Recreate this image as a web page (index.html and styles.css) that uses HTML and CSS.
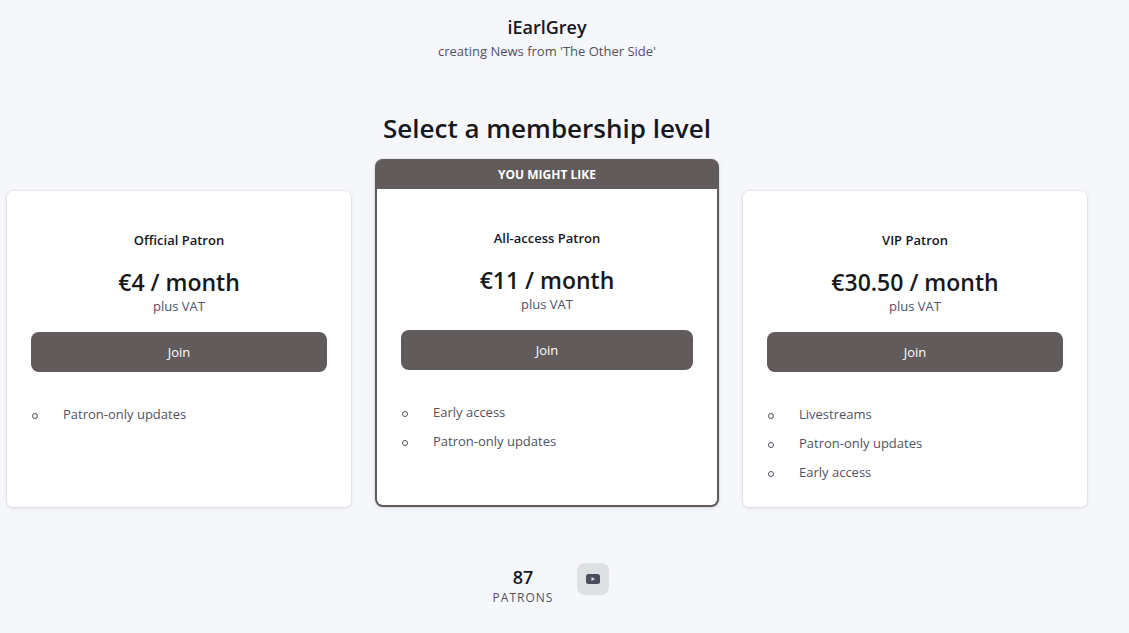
FILE: index.html
```html
<!DOCTYPE html>
<html lang="en">

<head>
    <meta charset="UTF-8">
    <meta name="viewport" content="width=device-width, initial-scale=1.0">
    <title>iEarlGrey | Membership</title>
    <link rel="stylesheet" href="styles.css">
</head>

<body>
    <header class="creator">
        <h1>iEarlGrey</h1>
        <p>creating News from 'The Other Side'</p>
    </header>

    <main>
        <h2>Select a membership level</h2>
        <div class="tiers">
            <section class="tier">
                <div class="tier-body">
                    <h3>Official Patron</h3>
                    <p class="price">€4 / month</p>
                    <p class="vat">plus VAT</p>
                    <button type="button">Join</button>
                    <ul>
                        <li>Patron-only updates</li>
                    </ul>
                </div>
            </section>
            <section class="tier featured">
                <p class="ribbon">YOU MIGHT LIKE</p>
                <div class="tier-body">
                    <h3>All-access Patron</h3>
                    <p class="price">€11 / month</p>
                    <p class="vat">plus VAT</p>
                    <button type="button">Join</button>
                    <ul>
                        <li>Early access</li>
                        <li>Patron-only updates</li>
                    </ul>
                </div>
            </section>
            <section class="tier">
                <div class="tier-body">
                    <h3>VIP Patron</h3>
                    <p class="price">€30.50 / month</p>
                    <p class="vat">plus VAT</p>
                    <button type="button">Join</button>
                    <ul>
                        <li>Livestreams</li>
                        <li>Patron-only updates</li>
                        <li>Early access</li>
                    </ul>
                </div>
            </section>
        </div>
    </main>

    <footer class="stats">
        <div class="patrons">
            <strong>87</strong>
            <span>PATRONS</span>
        </div>
        <a class="social" href="#" aria-label="YouTube">
            <svg width="14" height="10" viewBox="0 0 14 10">
                <rect width="14" height="10" rx="2.5" fill="#4b4d5c" />
                <path d="M5.5 2.9v4.2L9 5z" fill="#dfe0e4" />
            </svg>
        </a>
    </footer>
</body>

</html>
```

FILE: styles.css
```css
*,
*::before {
    box-sizing: border-box;
}

body {
    margin: 0;
    padding: 15px 42px 24px 7px;
    font-family: "Segoe UI", "Open Sans", "Noto Sans", sans-serif;
    font-size: 13px;
    line-height: 21px;
    color: #52525f;
    background: #f5f7fb;
}

h1,
h2,
h3,
p,
ul {
    margin: 0;
    padding: 0;
}

h1,
h2,
h3,
.price,
.patrons strong {
    font-weight: 600;
    color: #17171c;
}

/* Creator name */
.creator {
    text-align: center;
}

h1 {
    font-size: 18px;
    line-height: 24px;
}

.creator p {
    margin-top: 2px;
}

/* Membership tiers */
h2 {
    margin: 48px 0 13px;
    font-size: 26px;
    line-height: 36px;
    text-align: center;
}

.tiers {
    display: grid;
    grid-template-columns: repeat(3, 1fr);
    gap: 24px;
}

.tier {
    margin-top: 32px;
    background: #fff;
    border-radius: 6px;
    box-shadow: 0 0 0 1px rgba(0, 0, 0, 0.04), 0 1px 4px rgba(0, 0, 0, 0.1);
}

.tier.featured {
    margin-top: 0;
    border: 2px solid #625b5b;
    border-top: none;
    border-radius: 8px;
    background: #625b5b;
}

.ribbon {
    padding: 5px 0 4px;
    font-size: 12px;
    font-weight: 700;
    text-align: center;
    color: #fff;
}

.tier-body {
    padding: 40px 24px 24px;
    text-align: center;
}

.featured .tier-body {
    height: calc(100% - 30px);
    background: #fff;
    border-radius: 0 0 6px 6px;
}

h3 {
    margin-bottom: 18px;
    font-size: 13px;
    line-height: 18px;
}

.price {
    font-size: 23px;
    line-height: 30px;
}

.vat {
    line-height: 19px;
}

button {
    display: block;
    width: 100%;
    height: 40px;
    margin: 16px 0 32px;
    border: none;
    border-radius: 8px;
    font: inherit;
    color: #fff;
    background: #625b5b;
    cursor: pointer;
}

button:hover {
    background: #4f4949;
}

ul {
    display: grid;
    gap: 8px;
    list-style: none;
    text-align: left;
}

li {
    display: flex;
    align-items: center;
    gap: 25px;
}

li::before {
    content: "";
    width: 6px;
    height: 6px;
    margin: 3px 0 0 1px;
    border: 1px solid #52525f;
    border-radius: 50%;
}

/* Patron count and links */
.stats {
    display: flex;
    justify-content: center;
    align-items: flex-start;
    gap: 24px;
    margin-top: 56px;
    padding-left: 8px;
}

.patrons {
    display: flex;
    flex-direction: column;
    align-items: center;
}

.patrons strong {
    font-size: 18px;
    line-height: 28px;
}

.patrons span {
    font-size: 12px;
    line-height: 14px;
    letter-spacing: 1px;
}

.social {
    display: grid;
    place-items: center;
    width: 32px;
    height: 32px;
    border-radius: 8px;
    background: #dfe0e4;
}

/* Stack the tiers on small screens */
@media (max-width: 720px) {
    body {
        padding: 16px;
    }

    .tiers {
        grid-template-columns: 1fr;
    }

    .tier {
        margin-top: 0;
    }
}
```
